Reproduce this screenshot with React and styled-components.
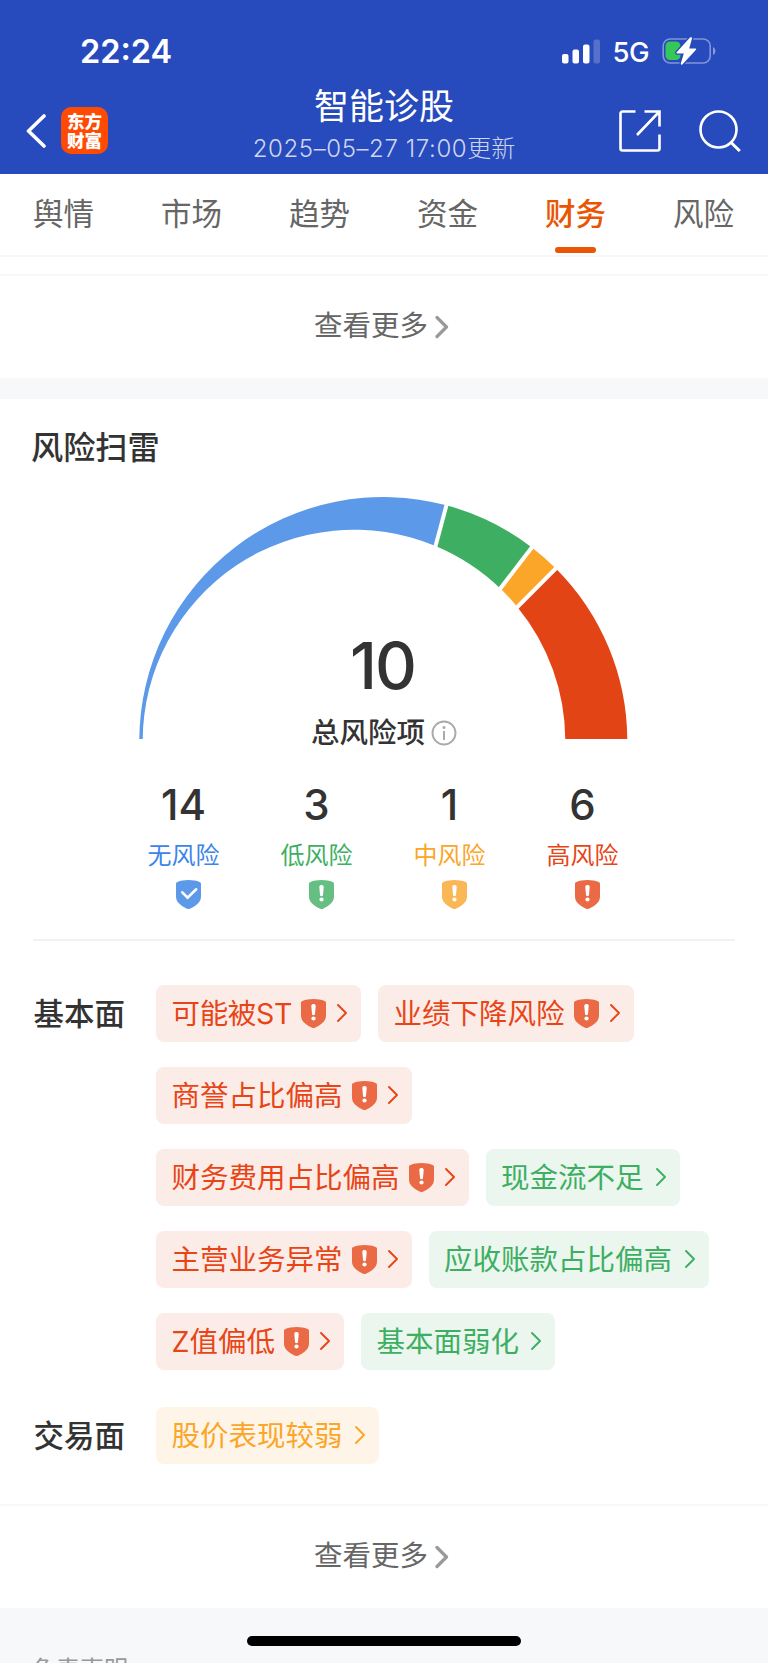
import React from "react";
import styled, { createGlobalStyle } from "styled-components";

const COLORS = {
  blue: "#5c99e9",
  green: "#3eaf62",
  orange: "#fba629",
  red: "#e34416",
};

const tabs = ["舆情", "市场", "趋势", "资金", "财务", "风险"];

const levels = [
  { label: "无风险", count: 14, color: COLORS.blue, text: "#3b85ea", shield: "#5c99e9", ok: true },
  { label: "低风险", count: 3, color: COLORS.green, text: "#3eaf62", shield: "#65be82" },
  { label: "中风险", count: 1, color: COLORS.orange, text: "#fba629", shield: "#fbb755" },
  { label: "高风险", count: 6, color: COLORS.red, text: "#e84517", shield: "#ea6a45" },
];

const tones = {
  high: { bg: "#fcece8", fg: "#e84517" },
  mid: { bg: "#fef5e8", fg: "#fba629" },
  low: { bg: "#ebf6ef", fg: "#3eaf62" },
};

const groups = [
  {
    name: "基本面",
    items: [
      { text: "可能被ST", tone: "high", warn: true, tight: true },
      { text: "业绩下降风险", tone: "high", warn: true },
      { text: "商誉占比偏高", tone: "high", warn: true },
      { text: "财务费用占比偏高", tone: "high", warn: true },
      { text: "现金流不足", tone: "low" },
      { text: "主营业务异常", tone: "high", warn: true },
      { text: "应收账款占比偏高", tone: "low" },
      { text: "Z值偏低", tone: "high", warn: true },
      { text: "基本面弱化", tone: "low" },
    ],
  },
  { name: "交易面", items: [{ text: "股价表现较弱", tone: "mid" }] },
];

const Shield = ({ color, ok }) => (
  <svg width="25" height="29" viewBox="0 0 25 29" fill="none">
    <path
      d="M1.500 1.900C4.500.7 8.300 0 12.500 0s8 .7 11 1.900c1.100.4 1.500.9 1.500 2V16.500c0 3-1.300 5.600-3.900 7.800-2 1.800-4.500 3.300-7.200 4.400-.9.400-1.900.4-2.800 0-2.700-1.100-5.200-2.600-7.200-4.400C1.300 22.100 0 19.500 0 16.500V3.900C0 2.800.4 2.300 1.500 1.900Z"
      fill={color}
    />
    {ok ? (
      <path d="M6.300 12.300l5.300 5.400 8.600-8.400" stroke="#fff" strokeWidth="2.600" strokeLinecap="round" />
    ) : (
      <>
        <path d="M10.300 7c0-2.600 4.400-2.600 4.400 0l-.7 8c-.2 1.600-2.800 1.600-3 0Z" fill="#fff" />
        <circle cx="12.500" cy="19.500" r="2.100" fill="#fff" />
      </>
    )}
  </svg>
);

const MoreArrow = () => (
  <svg width="14" height="24" viewBox="0 0 14 24" fill="none">
    <path d="M2 2.500l9.500 9.500L2 21.500" stroke="#999" strokeWidth="3.200" strokeLinecap="round" strokeLinejoin="round" />
  </svg>
);

const ChipArrow = () => (
  <svg width="10" height="18" viewBox="0 0 10 18" fill="none">
    <path d="M1 1l8 8-8 8" stroke="currentColor" strokeWidth="1.900" strokeLinecap="round" strokeLinejoin="round" />
  </svg>
);

// outer arc and a smaller inner circle shifted left, so the ring widens to the right
const OUTER = { x: 244.3, y: 244, r: 244 };
const INNER = { x: 215, y: 244, r: 211.3 };

const pointOuter = (deg) => {
  const a = (deg * Math.PI) / 180;
  return [OUTER.x + OUTER.r * Math.cos(a), OUTER.y - OUTER.r * Math.sin(a)];
};

// ray from the outer centre until it meets the inner circle
const pointInner = (deg) => {
  const a = (deg * Math.PI) / 180;
  const d = OUTER.x - INNER.x;
  const t =
    -d * Math.cos(a) +
    Math.sqrt(INNER.r * INNER.r - d * d * Math.sin(a) * Math.sin(a));
  return [OUTER.x + t * Math.cos(a), OUTER.y - t * Math.sin(a)];
};

const Gauge = () => {
  const total = levels.reduce((sum, l) => sum + l.count, 0);
  let deg = 180;
  const slices = levels.map((l) => {
    const from = deg;
    deg -= (l.count / total) * 180;
    return { color: l.color, from, to: deg };
  });

  return (
    <svg width="490" height="242.300" viewBox="0 0 490 242.300">
      {slices.map((s) => (
        <path
          key={s.color}
          fill={s.color}
          d={`M${pointOuter(s.from)} A${OUTER.r} ${OUTER.r} 0 0 1 ${pointOuter(s.to)} L${pointInner(s.to)} A${INNER.r} ${INNER.r} 0 0 0 ${pointInner(s.from)} Z`}
        />
      ))}
      {slices.slice(1).map((s) => {
        const [x, y] = pointOuter(s.from);
        return (
          <line key={s.color} x1={OUTER.x} y1={OUTER.y} x2={x + (x - OUTER.x) * 0.02} y2={y + (y - OUTER.y) * 0.02} stroke="#fff" strokeWidth="4" />
        );
      })}
    </svg>
  );
};

const App = () => {
  return (
    <Page>
      <GlobalStyle />
      <Header>
        <StatusBar>
          <Clock>22:24</Clock>
          <StatusIcons>
            <svg width="39" height="25" viewBox="0 0 39 25" fill="#fff">
              <rect x="0" y="15" width="6.500" height="9.500" rx="2" />
              <rect x="10.500" y="10.500" width="6.500" height="14" rx="2" />
              <rect x="21" y="5.500" width="6.500" height="19" rx="2" />
              <rect x="31.500" y="0.500" width="6.500" height="24" rx="2" opacity="0.22" />
            </svg>
            <Network>5G</Network>
            <svg width="55" height="28" viewBox="0 0 55 28" fill="none">
              <rect x="1.200" y="2" width="47" height="24" rx="7" stroke="#fff" strokeOpacity="0.42" strokeWidth="1.600" />
              <path d="M51 10c3.200 1.400 3.200 6.600 0 8z" fill="#fff" fillOpacity="0.45" />
              <rect x="3.500" y="4.500" width="15" height="18.500" rx="4.500" fill="#36c759" />
              <path
                d="M28 .6L14.600 15.200c-.5.600-.2 1.300.6 1.300h6.600L18.800 26.400c-.3 1.200.9 1.800 1.800.9L34 12.800c.5-.6.200-1.400-.6-1.400h-6.200L30 1.600C30.300.3 29-.4 28 .6Z"
                fill="#fff"
                stroke="#274abc"
                strokeWidth="2.600"
                paintOrder="stroke"
              />
            </svg>
          </StatusIcons>
        </StatusBar>
        <NavBar>
          <NavSide>
            <svg width="20" height="34" viewBox="0 0 20 34" fill="none">
              <path d="M18 2L2.500 17 18 32" stroke="#fff" strokeWidth="3.600" strokeLinecap="round" strokeLinejoin="round" />
            </svg>
            <Logo>
              <span>东方</span>
              <span>财富</span>
            </Logo>
          </NavSide>
          <Titles>
            <Title>智能诊股</Title>
            <Updated>
              <UpdatedTime>2025–05–27 17:00</UpdatedTime>更新
            </Updated>
          </Titles>
          <NavSide $end>
            <svg width="42" height="42" viewBox="0 0 42 42" fill="none" stroke="#fff" strokeWidth="2.600">
              <path d="M16.500 1.500H3.500a2 2 0 0 0-2 2v35a2 2 0 0 0 2 2h35a2 2 0 0 0 2-2V24.500" />
              <path d="M25.500 1.500h15v15M39.500 2.500L18 25" />
            </svg>
            <svg width="42" height="42" viewBox="0 0 42 42" fill="none" stroke="#fff" strokeWidth="2.600">
              <circle cx="19.500" cy="19.500" r="18" />
              <path d="M31.800 32.200l9 8.800" strokeWidth="3" />
            </svg>
          </NavSide>
        </NavBar>
      </Header>

      <Tabs>
        {tabs.map((t) => (
          <Tab key={t} $active={t === "财务"}>
            {t}
          </Tab>
        ))}
      </Tabs>

      <Spacer />
      <More>
        <MoreText>查看更多</MoreText>
        <MoreArrow />
      </More>
      <Band />

      <Section>
        <Heading>风险扫雷</Heading>
        <GaugeBox>
          <Gauge />
          <Total>
            <TotalNumber>10</TotalNumber>
            <TotalLabel>
              总风险项
              <svg width="26" height="26" viewBox="0 0 26 26" fill="none" stroke="#aaa">
                <circle cx="13" cy="13" r="11.500" strokeWidth="1.900" />
                <path d="M13 11v9" strokeWidth="2" />
                <circle cx="13" cy="7.500" r="1.500" fill="#aaa" stroke="none" />
              </svg>
            </TotalLabel>
          </Total>
        </GaugeBox>
        <Stats>
          {levels.map((l) => (
            <Stat key={l.label}>
              <StatCount>{l.count}</StatCount>
              <StatLabel $color={l.text}>{l.label}</StatLabel>
              <StatIcon>
                <Shield color={l.shield} ok={l.ok} />
              </StatIcon>
            </Stat>
          ))}
        </Stats>
        <Groups>
          {groups.map((g) => (
            <Group key={g.name}>
              <GroupName>{g.name}</GroupName>
              <Chips>
                {g.items.map((item) => (
                  <Chip key={item.text} $tone={item.tone} $tight={item.tight}>
                    {item.text}
                    {item.warn && (
                      <ChipShield>
                        <Shield color="#ea6a45" />
                      </ChipShield>
                    )}
                    <ChipArrow />
                  </Chip>
                ))}
              </Chips>
            </Group>
          ))}
        </Groups>
      </Section>

      <More>
        <MoreText>查看更多</MoreText>
        <MoreArrow />
      </More>
      <Footer>
        <Disclaimer>免责声明</Disclaimer>
        <HomeBar />
      </Footer>
    </Page>
  );
};

export default App;

const GlobalStyle = createGlobalStyle`
  * {
    box-sizing: border-box;
  }
  body {
    margin: 0;
    background: #fff;
  }
  svg {
    display: block;
    flex: none;
  }
`;

const Page = styled.div`
  width: 768px;
  height: 1663px;
  overflow: hidden;
  display: flex;
  flex-direction: column;
  background: #fff;
  color: #333;
  font-family: Inter, "Noto Sans CJK SC", sans-serif;
  white-space: nowrap;
  > * {
    flex: none;
  }
`;

const Header = styled.header`
  height: 173.500px;
  background: #274abc;
  color: #fff;
`;

const StatusBar = styled.div`
  display: flex;
  justify-content: space-between;
  align-items: center;
  height: 86px;
  padding: 16px 51px 0 80px;
`;

const Clock = styled.div`
  padding-top: 1px;
  font-size: 32.500px;
  font-weight: 600;
  line-height: 40px;
`;

const StatusIcons = styled.div`
  display: flex;
  align-items: center;
`;

const Network = styled.div`
  margin: 1px 13px 0 11px;
  font-size: 27.500px;
  font-weight: 500;
  line-height: 30px;
  letter-spacing: -0.5px;
`;

const NavBar = styled.div`
  display: grid;
  grid-template-columns: 200px 1fr 200px;
  align-items: start;
  height: 87px;
`;

const NavSide = styled.div`
  display: flex;
  align-items: center;
  justify-content: ${(p) => (p.$end ? "flex-end" : "flex-start")};
  gap: ${(p) => (p.$end ? "38px" : "15px")};
  height: 89px;
  padding: ${(p) => (p.$end ? "0 27px 0 0" : "0 0 0 26px")};
`;

const Logo = styled.div`
  display: flex;
  flex-direction: column;
  align-items: center;
  justify-content: center;
  width: 47px;
  height: 47px;
  border-radius: 10px;
  background: #ff4a03;
  font-size: 17.500px;
  font-weight: 900;
  line-height: 19px;
`;

const Titles = styled.div`
  text-align: center;
`;

const Title = styled.h1`
  margin: 0;
  font-size: 35px;
  font-weight: 400;
  line-height: 40px;
`;

const Updated = styled.div`
  margin-top: 7px;
  font-size: 24px;
  font-weight: 300;
  line-height: 31px;
  color: rgba(255, 255, 255, 0.78);
`;

const UpdatedTime = styled.span`
  letter-spacing: 0.6px;
`;

const Tabs = styled.nav`
  display: grid;
  grid-template-columns: repeat(6, 1fr);
  height: 83.500px;
  border-bottom: 2px solid #f6f7f8;
`;

const Tab = styled.div`
  display: flex;
  flex-direction: column;
  align-items: center;
  padding: 20px 1px 0 0;
  font-size: 30.500px;
  line-height: 40px;
  font-weight: ${(p) => (p.$active ? 500 : 400)};
  color: ${(p) => (p.$active ? "#ea5504" : "#666")};
  &::after {
    content: "";
    width: 41px;
    height: 6px;
    margin-top: 13px;
    border-radius: 3px;
    background: ${(p) => (p.$active ? "#ea5504" : "transparent")};
  }
`;

const Spacer = styled.div`
  height: 17px;
`;

const More = styled.div`
  display: flex;
  justify-content: center;
  align-items: center;
  gap: 7px;
  height: 104px;
  padding-right: 5px;
  border-top: 2px solid #f6f7f8;
`;

const MoreText = styled.span`
  padding-bottom: 3px;
  font-size: 28.500px;
  line-height: 40px;
  color: #666;
`;

const Band = styled.div`
  height: 21px;
  background: #f6f8fa;
`;

const Section = styled.section`
  height: 1105px;
`;

const Heading = styled.h2`
  margin: 0;
  padding: 28px 0 0 31px;
  font-size: 32.200px;
  font-weight: 500;
  line-height: 42px;
`;

const GaugeBox = styled.div`
  display: grid;
  justify-content: center;
  height: 250px;
  margin-top: 27.500px;
  > * {
    grid-area: 1 / 1;
  }
`;

const Total = styled.div`
  display: flex;
  flex-direction: column;
  align-items: center;
  padding-top: 134.500px;
`;

const TotalNumber = styled.div`
  padding-right: 3px;
  font-size: 65px;
  font-weight: 500;
  line-height: 70px;
  letter-spacing: -2px;
`;

const TotalLabel = styled.div`
  display: flex;
  align-items: center;
  gap: 6px;
  margin-top: 12px;
  font-size: 28.500px;
  font-weight: 500;
  line-height: 40px;
`;

const Stats = styled.div`
  display: grid;
  grid-template-columns: repeat(4, 133px);
  justify-content: center;
  height: 194px;
  margin: 0 33px;
  padding: 34px 2px 0 0;
  border-bottom: 2px solid #f1f2f3;
`;

const Stat = styled.div`
  display: flex;
  flex-direction: column;
  align-items: center;
`;

const StatCount = styled.div`
  font-size: 42px;
  font-weight: 500;
  line-height: 48px;
`;

const StatLabel = styled.div`
  margin-top: 12px;
  font-size: 24px;
  line-height: 30px;
  color: ${(p) => p.$color};
`;

const StatIcon = styled.div`
  margin-top: 9px;
  padding-left: 10px;
`;

const Groups = styled.div`
  display: flex;
  flex-direction: column;
  gap: 37px;
  padding: 44px 33px 0;
`;

const Group = styled.div`
  display: grid;
  grid-template-columns: 123px 1fr;
`;

const GroupName = styled.div`
  padding-left: 0.500px;
  font-size: 30.500px;
  font-weight: 500;
  line-height: 57px;
`;

const Chips = styled.div`
  display: flex;
  flex-wrap: wrap;
  gap: 25px 16.500px;
`;

const Chip = styled.div`
  display: flex;
  align-items: center;
  height: 57px;
  padding: 0 14px 0 15.500px;
  border-radius: 8px;
  font-size: 28.500px;
  line-height: 57px;
  letter-spacing: ${(p) => (p.$tight ? "-0.35px" : "normal")};
  background: ${(p) => tones[p.$tone].bg};
  color: ${(p) => tones[p.$tone].fg};
  > svg {
    margin-left: 12.500px;
  }
`;

const ChipShield = styled.span`
  margin: 0 -1.500px 0 9.500px;
`;

const Footer = styled.footer`
  display: flex;
  flex-direction: column;
  height: 56px;
  position: relative;
  background: #f6f8fa;
`;

const Disclaimer = styled.div`
  padding: 47px 0 0 32px;
  font-size: 24px;
  line-height: 30px;
  color: #999;
`;

const HomeBar = styled.div`
  position: absolute;
  left: 247px;
  top: 28px;
  width: 274px;
  height: 10px;
  border-radius: 5px;
  background: #000;
`;
